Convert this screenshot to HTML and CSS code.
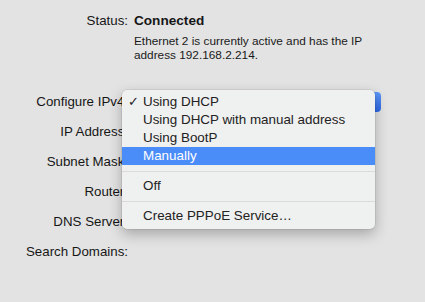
FILE: index.html
```html
<!DOCTYPE html>
<html>
<head>
<meta charset="utf-8">
<link rel="stylesheet" href="styles.css">
</head>
<body>
<div class="pane">
  <div class="status-row">
    <div class="label">Status:</div>
    <div class="value strong">Connected</div>
  </div>
  <div class="desc-row">
    <div class="label"></div>
    <div class="desc">Ethernet 2 is currently active and has the IP<br>address 192.168.2.214.</div>
  </div>
  <div class="fields">
    <div class="row">
      <div class="label">Configure IPv4:</div>
      <div class="value"><div class="popup"><span class="arrows"></span></div></div>
    </div>
    <div class="row"><div class="label">IP Address:</div><div class="value"></div></div>
    <div class="row"><div class="label">Subnet Mask:</div><div class="value"></div></div>
    <div class="row"><div class="label">Router:</div><div class="value"></div></div>
    <div class="row"><div class="label">DNS Server:</div><div class="value"></div></div>
    <div class="row"><div class="label">Search Domains:</div><div class="value"></div></div>
  </div>

  <div class="menu">
    <div class="item checked"><span class="check">✓</span>Using DHCP</div>
    <div class="item">Using DHCP with manual address</div>
    <div class="item">Using BootP</div>
    <div class="item active">Manually</div>
    <div class="sep"></div>
    <div class="item">Off</div>
    <div class="sep"></div>
    <div class="item">Create PPPoE Service…</div>
  </div>
</div>
</body>
</html>
```
FILE: styles.css
```css
html, body {
  margin: 0;
  padding: 0;
  background: #e3e3e3;
}
body {
  width: 425px;
  height: 302px;
  overflow: hidden;
  font-family: "Liberation Sans", Arial, sans-serif;
  color: #161616;
}
.pane {
  position: relative;
  padding-top: 12px;
}
.status-row, .desc-row, .row {
  display: grid;
  grid-template-columns: 128px 1fr;
  column-gap: 6px;
}
.label {
  text-align: right;
  font-size: 13.3px;
  white-space: nowrap;
}
.status-row {
  height: 18px;
  line-height: 18px;
}
.strong {
  font-weight: bold;
  font-size: 13.6px;
}
.desc-row {
  margin-top: 5px;
  height: 27px;
}
.desc {
  font-size: 11.8px;
  line-height: 13.5px;
  color: #1a1a1a;
  white-space: nowrap;
}
.fields {
  margin-top: 25px;
}
.row {
  height: 30px;
  line-height: 30px;
}
.value {
  position: relative;
}
.popup {
  margin-top: 5px;
  width: 247px;
  height: 20px;
  border-radius: 4px;
  background: #fff;
  position: relative;
}
.arrows {
  position: absolute;
  right: 0;
  top: 0;
  width: 17px;
  height: 20px;
  border-radius: 0 4px 4px 0;
  background: linear-gradient(#5b97f8, #2d68e6);
}
.menu {
  position: absolute;
  left: 122px;
  top: 90px;
  width: 253px;
  padding: 3px 0 4px;
  background: #eff0f0;
  border-radius: 5px;
  box-shadow: 0 0 0 0.5px rgba(0,0,0,0.12), 0 5px 14px rgba(0,0,0,0.28);
  font-size: 13.4px;
  color: #222;
}
.item {
  position: relative;
  height: 18px;
  line-height: 18px;
  padding-left: 21px;
  white-space: nowrap;
}
.item.active {
  background: #4b8df8;
  color: #fff;
}
.check {
  position: absolute;
  left: 6px;
  top: 0;
  font-size: 13px;
}
.sep {
  height: 1px;
  margin: 6px 0 5px;
  background: #dadada;
}
```
